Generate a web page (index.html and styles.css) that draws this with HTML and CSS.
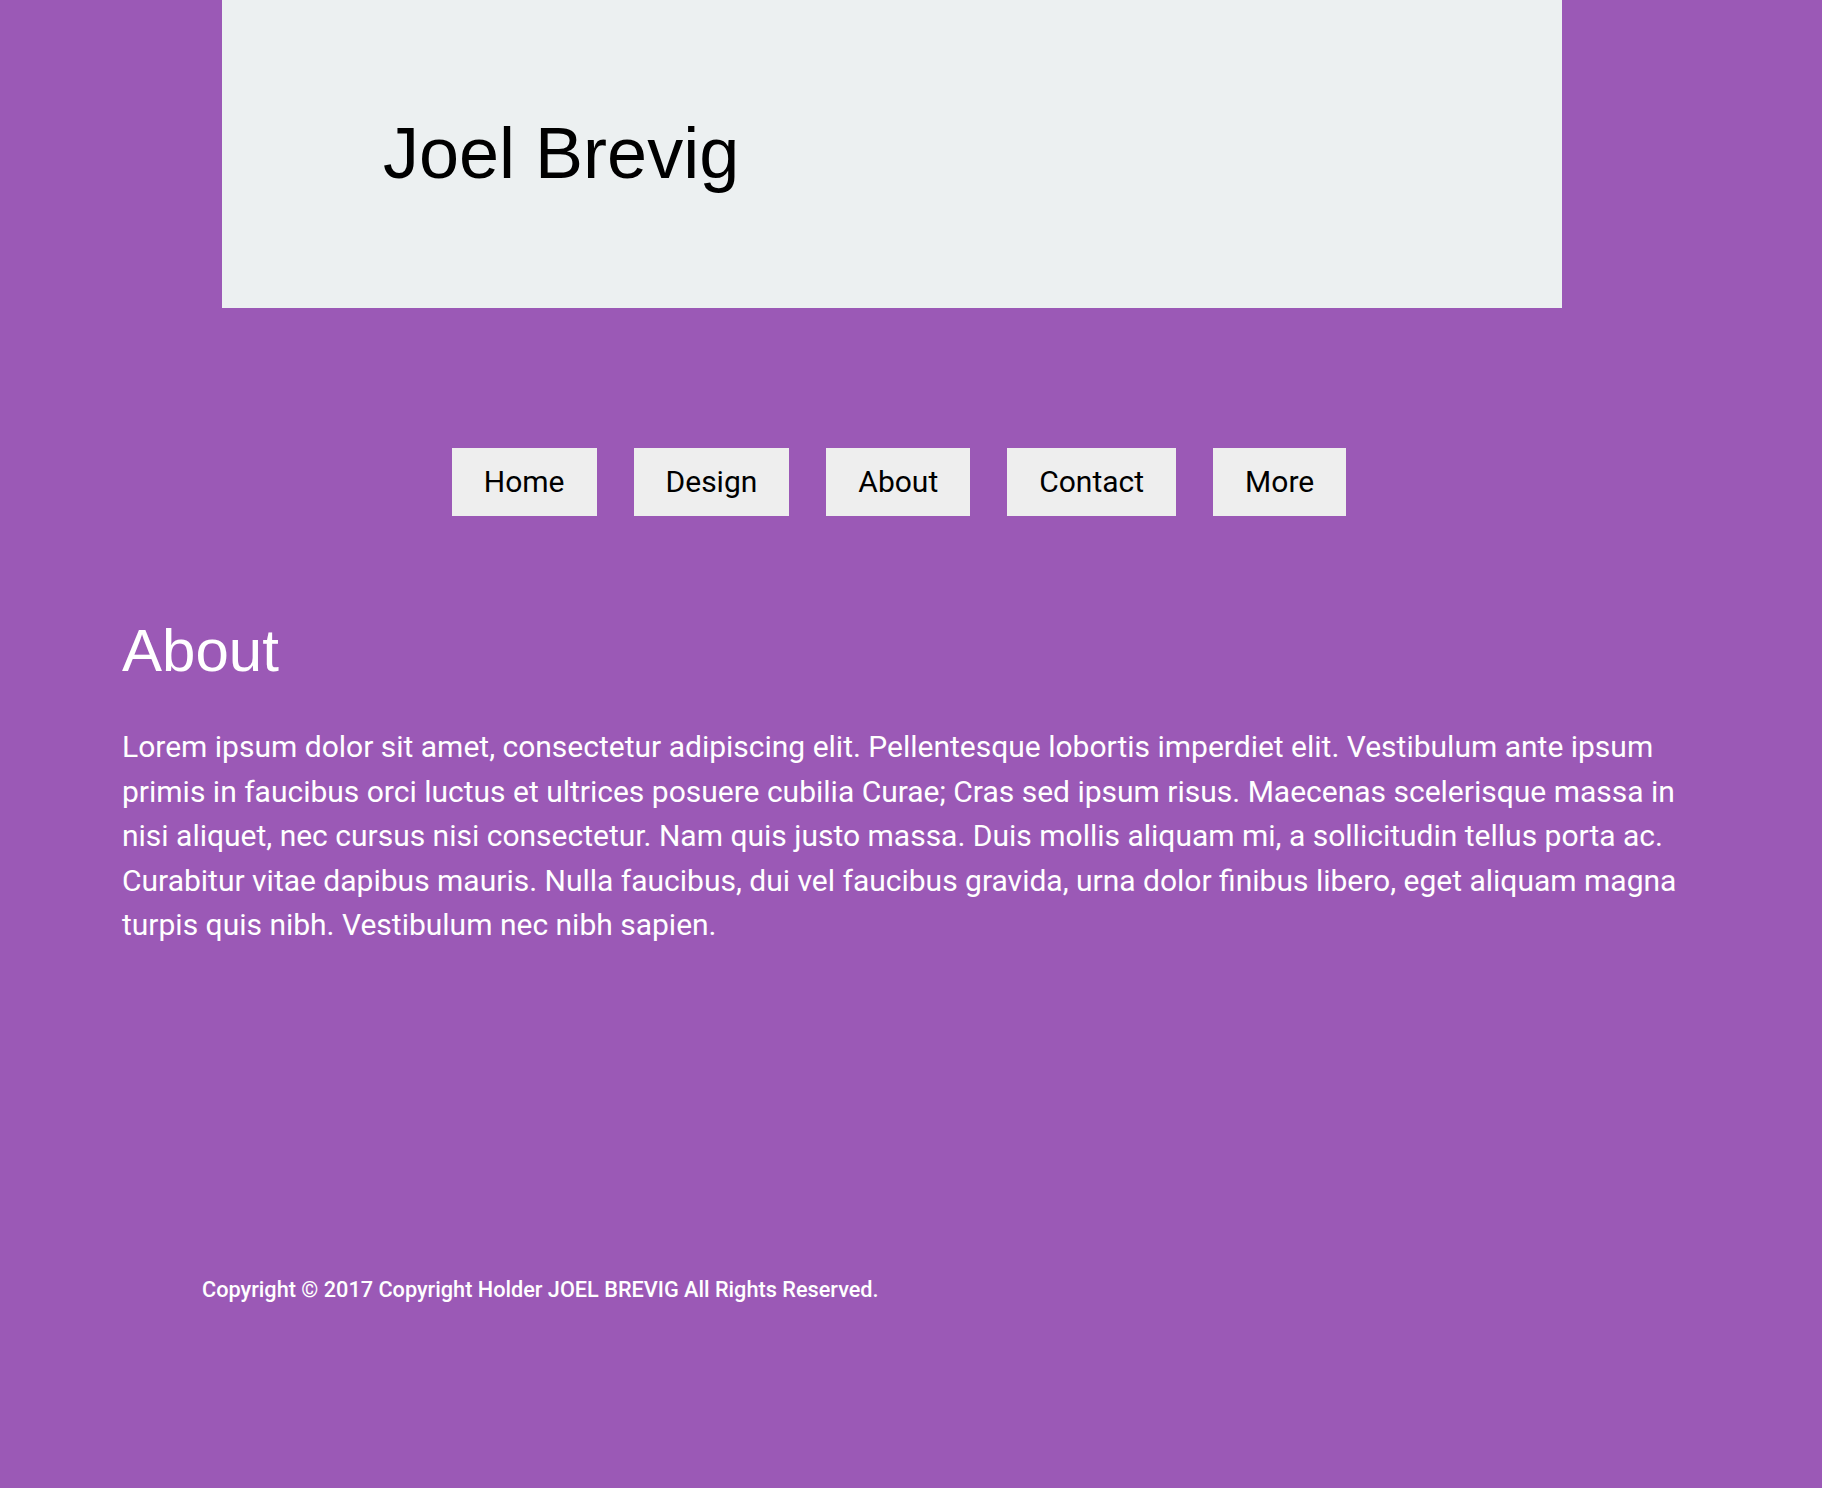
FILE: index.html
```html
<!DOCTYPE html>
<html lang="en">
<head>
<meta charset="utf-8">
<title>Joel Brevig</title>
<link rel="stylesheet" href="styles.css">
</head>
<body>
<header class="site-header">
  <h1 class="site-title">Joel Brevig</h1>
</header>
<nav class="site-nav">
  <a class="nav-btn" href="#">Home</a>
  <a class="nav-btn" href="#">Design</a>
  <a class="nav-btn" href="#">About</a>
  <a class="nav-btn" href="#">Contact</a>
  <a class="nav-btn" href="#">More</a>
</nav>
<main class="content">
  <h2 class="section-title">About</h2>
  <p class="section-text">Lorem ipsum dolor sit amet, consectetur adipiscing elit. Pellentesque lobortis imperdiet elit. Vestibulum ante ipsum primis in faucibus orci luctus et ultrices posuere cubilia Curae; Cras sed ipsum risus. Maecenas scelerisque massa in nisi aliquet, nec cursus nisi consectetur. Nam quis justo massa. Duis mollis aliquam mi, a sollicitudin tellus porta ac. Curabitur vitae dapibus mauris. Nulla faucibus, dui vel faucibus gravida, urna dolor finibus libero, eget aliquam magna turpis quis nibh. Vestibulum nec nibh sapien.</p>
</main>
<footer class="site-footer">
  <p class="copyright">Copyright © 2017 Copyright Holder JOEL BREVIG All Rights Reserved.</p>
</footer>
</body>
</html>
```
FILE: styles.css
```css
html, body {
  margin: 0;
  padding: 0;
}
body {
  background: #9b59b6;
  min-height: 1488px;
  font-family: Roboto, "Liberation Sans", Arial, sans-serif;
  color: #ffffff;
}
.site-header {
  margin-left: 222px;
  width: 1340px;
  height: 308px;
  box-sizing: border-box;
  background: #ecf0f1;
  padding: 117px 0 0 161px;
}
.site-title {
  margin: 0;
  font-family: "Liberation Sans", Arial, sans-serif;
  font-weight: 400;
  font-size: 72px;
  line-height: 72px;
  color: #000000;
}
.site-nav {
  display: flex;
  justify-content: center;
  gap: 37px;
  margin-top: 140px;
  padding-right: 24px;
}
.nav-btn {
  display: block;
  background: #eeeeee;
  color: #000000;
  text-decoration: none;
  font-size: 30px;
  line-height: 36px;
  padding: 16px 32px;
}
.content {
  padding: 0 122px;
}
.section-title {
  margin: 105px 0 0;
  font-family: "Liberation Sans", Arial, sans-serif;
  font-weight: 400;
  font-size: 60px;
  line-height: 60px;
}
.section-text {
  margin: 44px 0 0;
  font-size: 30px;
  line-height: 44.5px;
}
.site-footer {
  padding-left: 202px;
  margin-top: 329px;
}
.copyright {
  margin: 0;
  font-size: 21.7px;
  line-height: 26px;
  font-weight: 500;
}
```
